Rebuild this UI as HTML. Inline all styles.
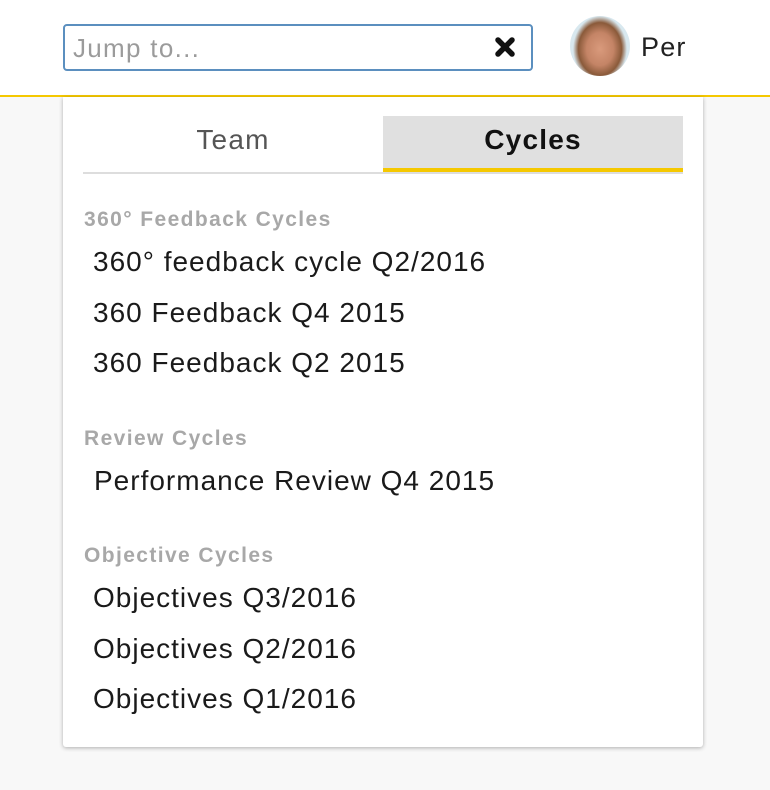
<!DOCTYPE html>
<html><head><style>
body{margin:0;width:770px;height:790px;background:#f8f8f8;font-family:"Liberation Sans",Arial,sans-serif;position:relative;overflow:hidden}
.hdr{position:absolute;left:0;top:0;width:770px;height:95px;background:#fff;border-bottom:2px solid #f5c800}
.search{position:absolute;left:63px;top:24px;width:466px;height:43px;border:2px solid #5b8fbf;border-radius:4px;background:#fff}
.search span{position:absolute;left:8px;top:7px;font-size:26px;color:#9b9b9b;letter-spacing:1.3px}
.x{position:absolute;left:430px;top:11px}
.av{position:absolute;left:570px;top:16px;width:60px;height:60px;border-radius:50%;background:radial-gradient(ellipse 45% 55% at 50% 55%,#d99a7c 0,#c48466 50%,#8a5a3a 80%,#d8e8ef 100%)}
.per{position:absolute;left:641px;top:32px;font-size:27px;color:#222;letter-spacing:1.2px}
.dd{position:absolute;left:63px;top:97px;width:640px;height:650px;background:#fff;box-shadow:0 1px 4px rgba(0,0,0,.3);border-radius:0 0 3px 3px}
.tabs{position:absolute;left:20px;top:19px;width:600px;height:56px;border-bottom:2px solid #ddd}
.t1{position:absolute;left:0;top:0;width:300px;height:56px;text-align:center;line-height:48px;font-size:28px;color:#555;letter-spacing:1.2px}
.t2{position:absolute;left:300px;top:0;width:300px;height:52px;background:#e0e0e0;border-bottom:4px solid #f5c800;text-align:center;line-height:48px;font-size:28px;font-weight:bold;color:#111;letter-spacing:1.2px}
.h{position:absolute;left:21px;font-size:21px;font-weight:bold;color:#a8a8a8;letter-spacing:1.4px}
.i{position:absolute;left:30px;font-size:28px;color:#1a1a1a;letter-spacing:1px}
</style></head><body>
<div class="hdr">
<div class="search"><span>Jump to...</span>
<svg class="x" width="20" height="20" viewBox="0 0 20 20"><path d="M3 3L17 17M17 3L3 17" stroke="#111" stroke-width="5.5" stroke-linecap="round"/></svg></div>
<div class="av"></div>
<div class="per">Per</div>
</div>
<div class="dd">
<div class="tabs"><div class="t1">Team</div><div class="t2">Cycles</div></div>
<div class="h" style="top:111px">360° Feedback Cycles</div>
<div class="i" style="top:149px">360° feedback cycle Q2/2016</div>
<div class="i" style="top:200px">360 Feedback Q4 2015</div>
<div class="i" style="top:250px">360 Feedback Q2 2015</div>
<div class="h" style="top:330px">Review Cycles</div>
<div class="i" style="top:368px;left:31px">Performance Review Q4 2015</div>
<div class="h" style="top:447px">Objective Cycles</div>
<div class="i" style="top:485px">Objectives Q3/2016</div>
<div class="i" style="top:536px">Objectives Q2/2016</div>
<div class="i" style="top:586px">Objectives Q1/2016</div>
</div>
</body></html>
